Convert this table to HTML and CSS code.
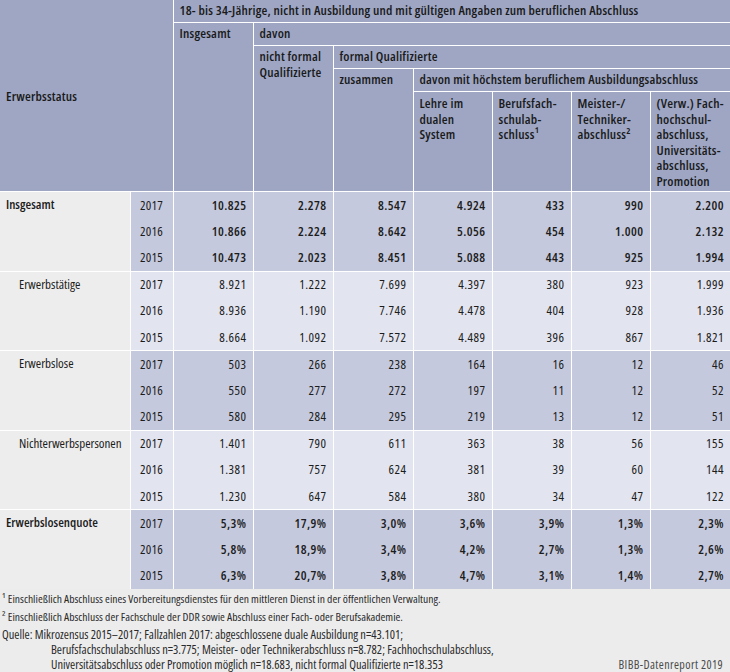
FILE: index.html
```html
<!DOCTYPE html>
<html lang="de">
<head>
<meta charset="utf-8">
<title>Erwerbsstatus</title>
<link rel="stylesheet" href="styles.css">
</head>
<body>
<table class="tbl">
  <colgroup>
    <col class="c-label"><col class="c-year"><col class="c-80"><col class="c-80"><col class="c-80"><col class="c-79"><col class="c-79"><col class="c-79"><col class="c-80">
  </colgroup>
  <thead>
    <tr class="h1">
      <th class="hd hd-main first" colspan="2" rowspan="5">Erwerbsstatus</th>
      <th class="hd last" colspan="7">18- bis 34-Jährige, nicht in Ausbildung und mit gültigen Angaben zum beruflichen Abschluss</th>
    </tr>
    <tr class="h2">
      <th class="hd" rowspan="4">Insgesamt</th>
      <th class="hd last" colspan="6">davon</th>
    </tr>
    <tr class="h3">
      <th class="hd" rowspan="3">nicht formal<br>Qualifizierte</th>
      <th class="hd last" colspan="5">formal Qualifizierte</th>
    </tr>
    <tr class="h4">
      <th class="hd" rowspan="2">zusammen</th>
      <th class="hd last" colspan="4">davon mit höchstem beruflichem Ausbildungsabschluss</th>
    </tr>
    <tr class="h5">
      <th class="hd hd-tall">Lehre im<br>dualen<br>System</th>
      <th class="hd hd-tall">Berufsfach-<br>schulab-<br>schluss¹</th>
      <th class="hd hd-tall">Meister-/<br>Techniker-<br>abschluss²</th>
      <th class="hd hd-tall last">(Verw.) Fach-<br>hochschul-<br>abschluss,<br>Universitäts-<br>abschluss,<br>Promotion</th>
    </tr>
  </thead>
  <tbody class="grp dark bold">
    <tr class="gstart"><td class="lbl lbl-main" rowspan="3">Insgesamt</td><td class="yr">2017</td><td class="n">10.825</td><td class="n">2.278</td><td class="n">8.547</td><td class="n">4.924</td><td class="n">433</td><td class="n">990</td><td class="n last">2.200</td></tr>
    <tr><td class="yr">2016</td><td class="n">10.866</td><td class="n">2.224</td><td class="n">8.642</td><td class="n">5.056</td><td class="n">454</td><td class="n">1.000</td><td class="n last">2.132</td></tr>
    <tr><td class="yr">2015</td><td class="n">10.473</td><td class="n">2.023</td><td class="n">8.451</td><td class="n">5.088</td><td class="n">443</td><td class="n">925</td><td class="n last">1.994</td></tr>
  </tbody>
  <tbody class="grp light">
    <tr class="gstart"><td class="lbl lbl-sub" rowspan="3">Erwerbstätige</td><td class="yr">2017</td><td class="n">8.921</td><td class="n">1.222</td><td class="n">7.699</td><td class="n">4.397</td><td class="n">380</td><td class="n">923</td><td class="n last">1.999</td></tr>
    <tr><td class="yr">2016</td><td class="n">8.936</td><td class="n">1.190</td><td class="n">7.746</td><td class="n">4.478</td><td class="n">404</td><td class="n">928</td><td class="n last">1.936</td></tr>
    <tr><td class="yr">2015</td><td class="n">8.664</td><td class="n">1.092</td><td class="n">7.572</td><td class="n">4.489</td><td class="n">396</td><td class="n">867</td><td class="n last">1.821</td></tr>
  </tbody>
  <tbody class="grp dark">
    <tr class="gstart"><td class="lbl lbl-sub" rowspan="3">Erwerbslose</td><td class="yr">2017</td><td class="n">503</td><td class="n">266</td><td class="n">238</td><td class="n">164</td><td class="n">16</td><td class="n">12</td><td class="n last">46</td></tr>
    <tr><td class="yr">2016</td><td class="n">550</td><td class="n">277</td><td class="n">272</td><td class="n">197</td><td class="n">11</td><td class="n">12</td><td class="n last">52</td></tr>
    <tr><td class="yr">2015</td><td class="n">580</td><td class="n">284</td><td class="n">295</td><td class="n">219</td><td class="n">13</td><td class="n">12</td><td class="n last">51</td></tr>
  </tbody>
  <tbody class="grp light">
    <tr class="gstart"><td class="lbl lbl-sub" rowspan="3">Nichterwerbspersonen</td><td class="yr">2017</td><td class="n">1.401</td><td class="n">790</td><td class="n">611</td><td class="n">363</td><td class="n">38</td><td class="n">56</td><td class="n last">155</td></tr>
    <tr><td class="yr">2016</td><td class="n">1.381</td><td class="n">757</td><td class="n">624</td><td class="n">381</td><td class="n">39</td><td class="n">60</td><td class="n last">144</td></tr>
    <tr><td class="yr">2015</td><td class="n">1.230</td><td class="n">647</td><td class="n">584</td><td class="n">380</td><td class="n">34</td><td class="n">47</td><td class="n last">122</td></tr>
  </tbody>
  <tbody class="grp dark bold">
    <tr class="gstart"><td class="lbl lbl-main" rowspan="3">Erwerbslosenquote</td><td class="yr">2017</td><td class="n">5,3%</td><td class="n">17,9%</td><td class="n">3,0%</td><td class="n">3,6%</td><td class="n">3,9%</td><td class="n">1,3%</td><td class="n last">2,3%</td></tr>
    <tr><td class="yr">2016</td><td class="n">5,8%</td><td class="n">18,9%</td><td class="n">3,4%</td><td class="n">4,2%</td><td class="n">2,7%</td><td class="n">1,3%</td><td class="n last">2,6%</td></tr>
    <tr><td class="yr">2015</td><td class="n">6,3%</td><td class="n">20,7%</td><td class="n">3,8%</td><td class="n">4,7%</td><td class="n">3,1%</td><td class="n">1,4%</td><td class="n last">2,7%</td></tr>
  </tbody>
</table>
<div class="foot">
  <p class="fn">¹ Einschließlich Abschluss eines Vorbereitungsdienstes für den mittleren Dienst in der öffentlichen Verwaltung.</p>
  <p class="fn">² Einschließlich Abschluss der Fachschule der DDR sowie Abschluss einer Fach- oder Berufsakademie.</p>
  <div class="src-row">
    <p class="src">Quelle: Mikrozensus 2015–2017; Fallzahlen 2017: abgeschlossene duale Ausbildung n=43.101;<br>Berufsfachschulabschluss n=3.775; Meister- oder Technikerabschluss n=8.782; Fachhochschulabschluss,<br>Universitätsabschluss oder Promotion möglich n=18.683, nicht formal Qualifizierte n=18.353</p>
    <p class="credit">BIBB-Datenreport 2019</p>
  </div>
</div>
</body>
</html>
```
FILE: styles.css
```css
html, body {
  margin: 0;
  padding: 0;
  background: #ececec;
}
body {
  width: 730px;
  height: 672px;
  overflow: hidden;
  font-family: "Open Sans", "DejaVu Sans Condensed", sans-serif;
  font-stretch: 75%;
  color: #1c1c1c;
}
.tbl {
  width: 730px;
  border-collapse: collapse;
  table-layout: fixed;
  font-size: 13px;
}
.c-label { width: 130px; }
.c-year { width: 43px; }
.c-80 { width: 80px; }
.c-79 { width: 79px; }

.hd {
  background: #9ea6c4;
  font-weight: 600;
  font-size: 13.3px;
  letter-spacing: 0.2px;
  text-align: left;
  vertical-align: top;
  padding: 3px 6px 0 6px;
  line-height: 15.5px;
  border: 1px solid #fff;
  border-top: none;
  color: #1a1a1a;
  white-space: nowrap;
}
.h1 .hd { height: 19px; }
.h2 .hd, .h3 .hd, .h4 .hd { height: 19px; border-top: 1px solid #fff; }
.h1 .hd-main { border-left: none; vertical-align: middle; border-top: none; }
.hd.first { border-left: none; }
.hd.last { border-right: none; }
.h5 .hd { height: 95px; padding-top: 4px; border-top: 1px solid #fff; }

.grp td {
  height: 26.2px;
  padding: 0 6px;
  line-height: 15px;
  vertical-align: middle;
  border-left: 1px solid #fff;
  border-right: 1px solid #fff;
  white-space: nowrap;
}
.grp .gstart td { border-top: 1px solid #fff; }
.grp td.last { border-right: none; }
.grp td.lbl {
  background: #ededed;
  border-left: none;
  vertical-align: top;
  padding-top: 5px;
}
.lbl-main { font-weight: 600; }
.grp td.lbl-sub { padding-left: 19px; }
.grp td.yr { text-align: center; padding: 0; font-weight: normal; letter-spacing: 0.2px; }
.grp td.n { text-align: right; padding-right: 6px; letter-spacing: 0.45px; }
.bold td.n { font-weight: 600; }
.dark td.yr, .dark td.n { background: #c5c9dd; }
.light td.yr, .light td.n { background: #e2e4ef; }

.foot {
  background: #ececec;
  font-size: 11.6px;
  color: #2a2a2a;
  padding: 1px 7px 0 2px;
}
.fn {
  margin: 0;
  line-height: 18px;
  white-space: nowrap;
}
.src-row {
  display: flex;
  justify-content: space-between;
  align-items: flex-end;
  margin-top: 1px;
}
.src {
  margin: 0;
  line-height: 15px;
  padding-left: 49px;
  text-indent: -49px;
  white-space: nowrap;
  font-size: 12.4px;
}
.credit {
  margin: 0;
  line-height: 15px;
  color: #4a4a4a;
  font-size: 12px;
  letter-spacing: 0.4px;
}
```
